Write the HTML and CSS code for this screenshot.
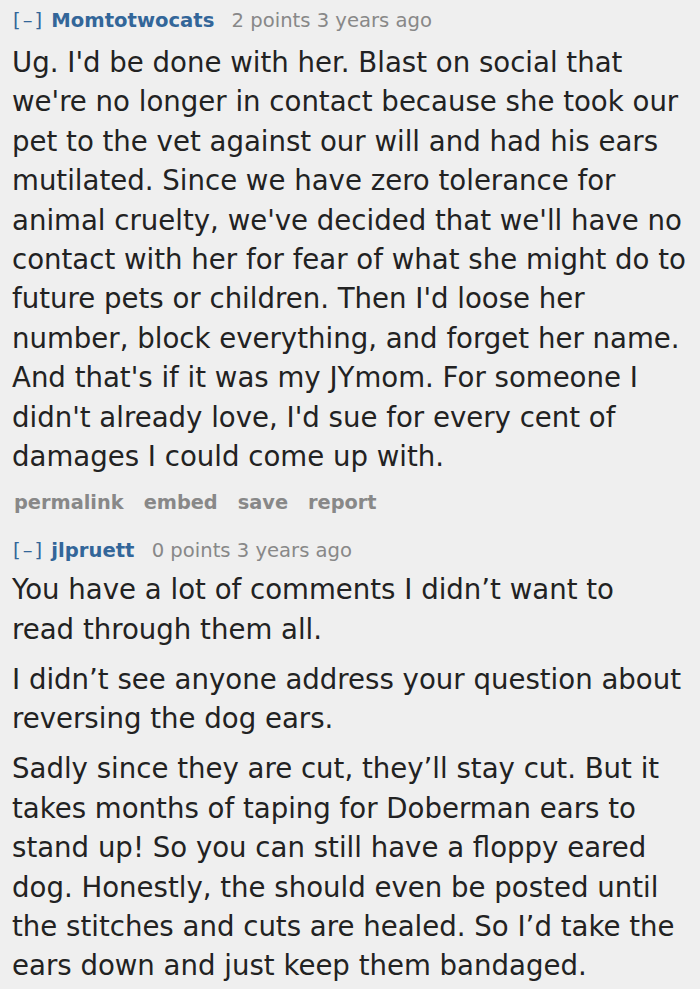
FILE: index.html
```html
<!DOCTYPE html>
<html>
<head>
<meta charset="utf-8">
<link rel="stylesheet" href="styles.css">
</head>
<body>
<div class="thread">
  <div class="comment">
    <p class="tagline"><span class="expand">[–]</span> <span class="author">Momtotwocats</span> <span class="score">2 points</span> <span class="time">3 years ago</span></p>
    <div class="md">
      <p>Ug. I'd be done with her. Blast on social that we're no longer in contact because she took our pet to the vet against our will and had his ears mutilated. Since we have zero tolerance for animal cruelty, we've decided that we'll have no contact with her for fear of what she might do to future pets or children. Then I'd loose her number, block everything, and forget her name. And that's if it was my JYmom. For someone I didn't already love, I'd sue for every cent of damages I could come up with.</p>
    </div>
    <ul class="buttons">
      <li>permalink</li>
      <li>embed</li>
      <li>save</li>
      <li>report</li>
    </ul>
  </div>
  <div class="comment">
    <p class="tagline"><span class="expand">[–]</span> <span class="author">jlpruett</span> <span class="score">0 points</span> <span class="time">3 years ago</span></p>
    <div class="md">
      <p>You have a lot of comments I didn’t want to<br>read through them all.</p>
      <p>I didn’t see anyone address your question about reversing the dog ears.</p>
      <p>Sadly since they are cut, they’ll stay cut. But it takes months of taping for Doberman ears to stand up! So you can still have a floppy eared dog. Honestly, the should even be posted until the stitches and cuts are healed. So I’d take the ears down and just keep them bandaged.</p>
    </div>
  </div>
</div>
</body>
</html>
```

FILE: styles.css
```css
html, body {
  margin: 0;
  padding: 0;
  background: #efefef;
}
body {
  font-family: Verdana, "DejaVu Sans", sans-serif;
  color: #222222;
  overflow: hidden;
}
.thread {
  padding: 6px 8px 0 12px;
}
.comment + .comment {
  margin-top: 18px;
}
.tagline {
  margin: 0 0 7px 0;
  font-size: 19.6px;
  line-height: 30px;
  color: #888888;
}
.comment + .comment .tagline {
  margin-bottom: 4px;
}
.expand {
  color: #336699;
  letter-spacing: 2px;
  margin: 0 1px 0 1px;
}
.author {
  color: #336699;
  font-weight: bold;
  margin-right: 11px;
}
.md {
  font-size: 27.6px;
  line-height: 39.4px;
}
.md p {
  margin: 0 0 10.6px 0;
}
.md p:last-child {
  margin-bottom: 0;
}
.buttons {
  list-style: none;
  margin: 12px 0 0 0;
  padding: 0 0 0 2px;
  display: flex;
  gap: 20px;
  font-size: 19.35px;
  font-weight: bold;
  color: #888888;
  line-height: 30px;
}
```
